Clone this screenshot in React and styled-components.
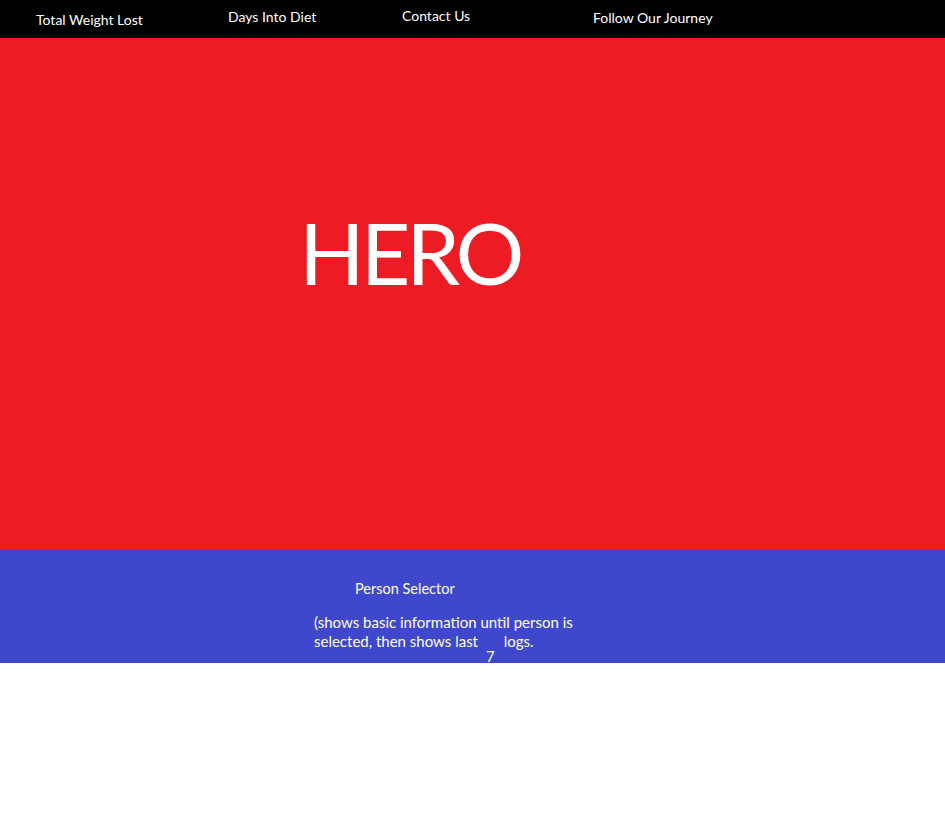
import React from "react";
import styled, { createGlobalStyle } from "styled-components";

const GlobalStyle = createGlobalStyle`
  html, body {
    margin: 0;
    padding: 0;
    background: #ffffff;
    font-family: Lato, "Open Sans", sans-serif;
  }
`;

const Page = styled.div`
  width: 945px;
  min-height: 825px;
  background: #ffffff;
`;

const Nav = styled.nav`
  height: 38px;
  background: #000000;
  display: flex;
  align-items: flex-start;
  padding-left: 36px;
  box-sizing: border-box;
`;

const NavItem = styled.a`
  display: block;
  width: ${(props) => props.width}px;
  margin-top: ${(props) => props.top}px;
  color: #ffffff;
  font-size: 14px;
  line-height: 16px;
  text-decoration: none;
  white-space: nowrap;
`;

const Hero = styled.section`
  height: 511px;
  background: #ed1c24;
  padding: 159px 0 0 299px;
  box-sizing: border-box;
`;

const HeroTitle = styled.h1`
  margin: 0;
  color: #ffffff;
  font-weight: 400;
  font-size: 86px;
  line-height: 110px;
  letter-spacing: -4px;
`;

const Selector = styled.section`
  height: 114px;
  background: #3f48cc;
  display: flex;
  flex-direction: column;
  padding: 31px 0 0 314px;
  box-sizing: border-box;
  color: #ffffff;
`;

const SelectorTitle = styled.div`
  margin-left: 41px;
  font-size: 14.5px;
  line-height: 18px;
`;

const SelectorText = styled.p`
  margin: 15px 0 0;
  width: 270px;
  font-size: 15px;
  line-height: 19px;
`;

const Count = styled.span`
  display: inline-block;
  margin: 0 9px 0 8px;
  line-height: 10px;
  vertical-align: -15px;
`;

const navLinks = [
  { label: "Total Weight Lost", width: 192, top: 12 },
  { label: "Days Into Diet", width: 174, top: 9 },
  { label: "Contact Us", width: 191, top: 8 },
  { label: "Follow Our Journey", width: 150, top: 10 },
];

function App() {
  return (
    <Page>
      <GlobalStyle />
      <Nav>
        {navLinks.map((link) => (
          <NavItem key={link.label} width={link.width} top={link.top}>
            {link.label}
          </NavItem>
        ))}
      </Nav>
      <Hero>
        <HeroTitle>HERO</HeroTitle>
      </Hero>
      <Selector>
        <SelectorTitle>Person Selector</SelectorTitle>
        <SelectorText>
          (shows basic information until person is selected, then shows last
          <Count>7</Count>logs.
        </SelectorText>
      </Selector>
    </Page>
  );
}

export default App;
